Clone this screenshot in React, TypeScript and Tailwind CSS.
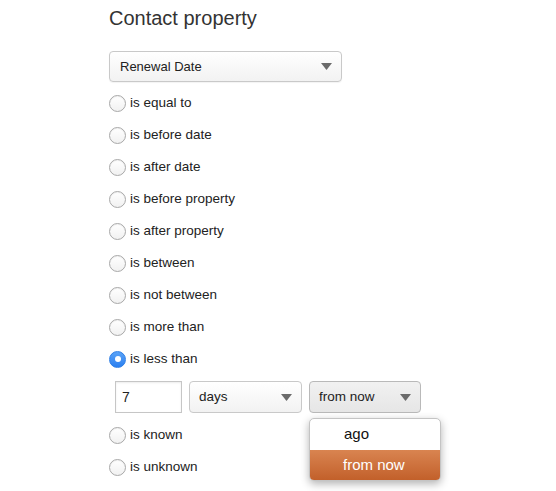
import React from "react";

const options = [
  "is equal to",
  "is before date",
  "is after date",
  "is before property",
  "is after property",
  "is between",
  "is not between",
  "is more than",
];

function Radio({ checked }: { checked?: boolean }) {
  if (checked) {
    return (
      <span className="flex h-[17px] w-[17px] items-center justify-center rounded-full border border-[#2f7fe6] bg-gradient-to-b from-[#5aa3f7] to-[#2a7ff0]">
        <span className="h-[6px] w-[6px] rounded-full bg-white" />
      </span>
    );
  }
  return <span className="h-[17px] w-[17px] rounded-full border border-[#a8a8a8] bg-gradient-to-b from-white to-[#f1f1f1] shadow-[inset_0_1px_1px_rgba(0,0,0,0.06)]" />;
}

function Caret() {
  return (
    <svg width="11" height="7" viewBox="0 0 11 7">
      <path d="M0 0 H11 L5.5 7 Z" fill="#6b6b6b" />
    </svg>
  );
}

export default function App() {
  return (
    <div className="min-h-[491px] w-[556px] bg-white pl-[109px] pt-[5px] text-[13.5px] text-[#222] [font-family:'Liberation_Sans',Arial,sans-serif]">
      <div className="h-[26px] text-[20px] leading-[26px] text-[#333]">Contact property</div>

      {/*property select*/}
      <div className="mt-[20px] flex h-[31px] w-[233px] items-center justify-between rounded-[4px] border border-[#c9c9c9] bg-gradient-to-b from-white to-[#f2f2f2] pl-[10px] pr-[9px] text-[13px] shadow-[0_1px_1px_rgba(0,0,0,0.05)]">
        <span>Renewal Date</span>
        <Caret />
      </div>

      <div className="mt-[5px] flex flex-col">
        {options.map((o) => (
          <label key={o} className="flex h-[32px] items-center gap-[4px]">
            <Radio />
            <span>{o}</span>
          </label>
        ))}
        <label className="flex h-[32px] items-center gap-[4px]">
          <Radio checked />
          <span>is less than</span>
        </label>

        {/*value row*/}
        <div className="my-[6px] ml-[6px] flex h-[32px] items-stretch gap-[7px]">
          <div className="flex w-[67px] items-center border border-[#c6c6c6] bg-white pl-[6px] text-[14px] shadow-[inset_0_1px_2px_rgba(0,0,0,0.08)]">7</div>
          <div className="flex w-[113px] items-center justify-between rounded-[4px] border border-[#c9c9c9] bg-gradient-to-b from-white to-[#f2f2f2] pl-[9px] pr-[9px]">
            <span>days</span>
            <Caret />
          </div>
          <div className="relative flex w-[112px] items-center justify-between rounded-[4px] border border-[#b9b9b9] bg-gradient-to-b from-[#f1f1f1] to-[#e6e6e6] pl-[9px] pr-[9px]">
            <span>from now</span>
            <Caret />
            {/*open menu*/}
            <div className="absolute left-[-1px] top-[36px] z-10 w-[132px] overflow-hidden rounded-[5px] border border-[#c4c4c4] bg-white shadow-[0_3px_8px_rgba(0,0,0,0.3)]">
              <div className="flex h-[31px] items-center pl-[34px] text-[15px] text-[#111]">ago</div>
              <div className="flex h-[30px] items-center bg-gradient-to-b from-[#d98450] to-[#c2602a] pl-[33px] text-[15px] text-white">from now</div>
            </div>
          </div>
        </div>

        <label className="flex h-[32px] items-center gap-[4px]">
          <Radio />
          <span>is known</span>
        </label>
        <label className="flex h-[32px] items-center gap-[4px]">
          <Radio />
          <span>is unknown</span>
        </label>
      </div>
    </div>
  );
}
